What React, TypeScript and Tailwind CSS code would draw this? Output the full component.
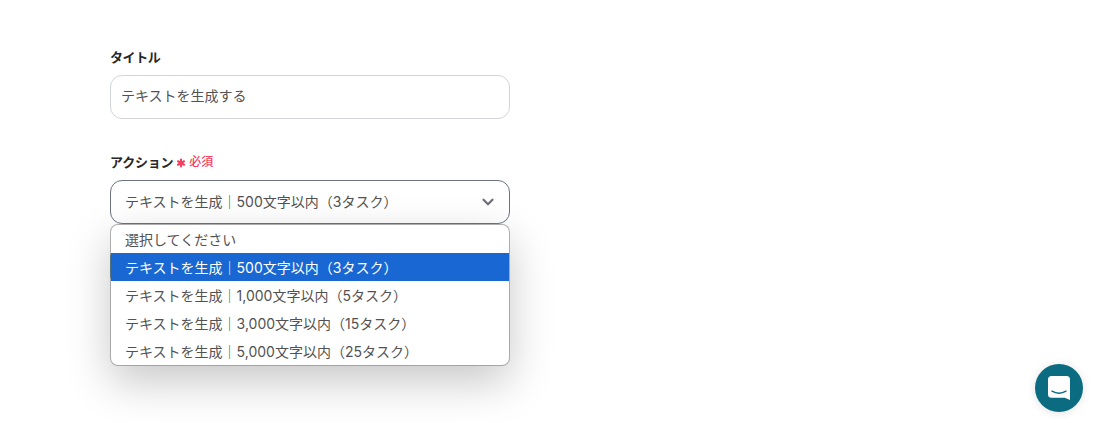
import { Asterisk, ChevronDown } from "lucide-react";

const OPTIONS = [
  "選択してください",
  "テキストを生成｜500文字以内（3タスク）",
  "テキストを生成｜1,000文字以内（5タスク）",
  "テキストを生成｜3,000文字以内（15タスク）",
  "テキストを生成｜5,000文字以内（25タスク）",
];

export default function App() {
  return (
    <main className="relative h-[423px] w-[1099px] overflow-hidden bg-white pl-[110px] pt-[48px] font-['Inter','Noto_Sans_CJK_JP',sans-serif] text-[14px] text-[#525252]">
      <div className="w-[400px]">
        {/* タイトル */}
        <label className="block h-[18px] text-[13px] font-bold leading-[18px] tracking-[-0.4px] text-[#27272a]">タイトル</label>
        <div className="mt-[9px] flex h-[44px] items-center rounded-[12px] border border-[#d1d5db] px-[10px] pb-[3px]">
          テキストを生成する
        </div>

        {/* アクション */}
        <div className="mt-[34px] flex h-[18px] items-center text-[13px] font-bold leading-[18px] tracking-[-0.2px] text-[#27272a]">
          アクション
          <Asterisk size={14} strokeWidth={3.5} className="ml-[1px] mt-[2px] text-[#f43f5e]" />
          <span className="ml-[1px] text-[12px] font-medium tracking-normal text-[#f43f5e]">必須</span>
        </div>
        <div className="relative mt-[9px]">
          <div className="flex h-[44px] items-center justify-between rounded-[12px] border border-[#6b7280] pb-[2px] pl-[14px] pr-[12px]">
            <span>{OPTIONS[1]}</span>
            <ChevronDown size={18} strokeWidth={3} className="mt-[2px] text-[#71717a]" />
          </div>

          {/* ドロップダウン */}
          <ul className="absolute left-0 top-[44px] z-10 h-[142px] w-[400px] overflow-hidden rounded-[8px] border border-[#808080]/60 bg-white bg-clip-padding shadow-[0_16px_44px_rgba(0,0,0,0.22)]">
            {OPTIONS.map((opt, i) => (
              <li
                key={opt}
                className={`flex h-[28px] items-center pl-[14px] ${i === 1 ? "bg-[#1967d2] text-white" : ""}`}
              >
                {opt}
              </li>
            ))}
          </ul>

          {/* 背面のボタン */}
          <div className="mt-[27px] h-[31px] w-[120px] rounded-[6px] bg-[#0e6b82]" />
        </div>
      </div>

      {/* チャットボタン */}
      <button className="absolute left-[1035px] top-[364px] flex h-[48px] w-[48px] items-center justify-center rounded-full bg-[#0b6b80] shadow-[0_1px_8px_rgba(0,0,0,0.12)]">
        <svg viewBox="0 0 24 24" className="h-[24px] w-[24px]">
          <path d="M4.5 0h15A3.5 3.5 0 0 1 23 3.5V24l-5.2-2.3H4.5A3.5 3.5 0 0 1 1 18.2V3.5A3.5 3.5 0 0 1 4.5 0z" fill="#fff" />
          <path d="M5 15.2c4.2 2.4 9.8 2.4 14 0" fill="none" stroke="#0b6b80" strokeWidth="1.4" strokeLinecap="round" />
        </svg>
      </button>
    </main>
  );
}
